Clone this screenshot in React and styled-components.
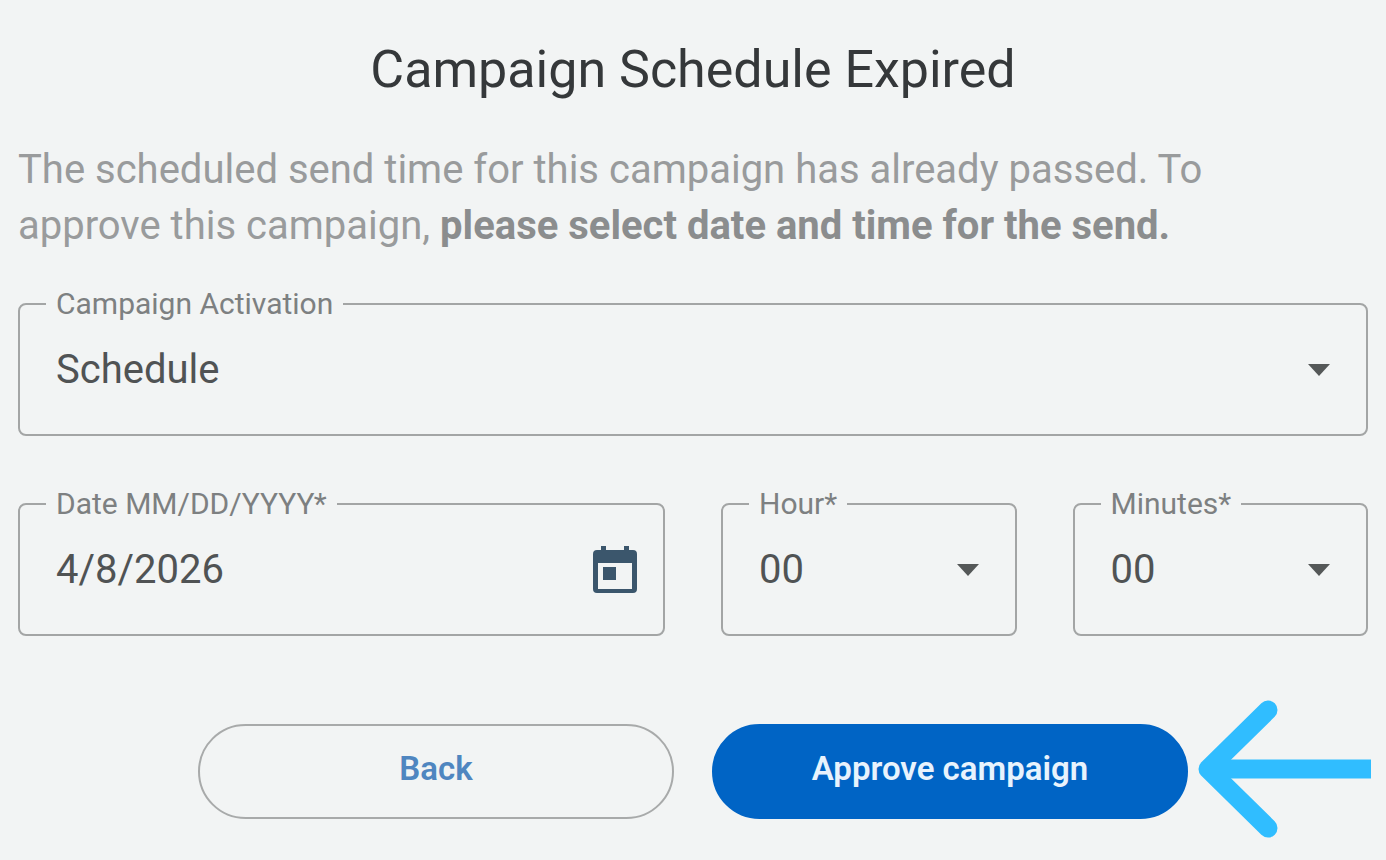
import { useState } from "react";
import styled, { createGlobalStyle } from "styled-components";

const GlobalStyle = createGlobalStyle`
  * {
    box-sizing: border-box;
  }

  body {
    margin: 0;
    background-color: #f2f4f4;
    font-family: Roboto, "Liberation Sans", sans-serif;
  }
`;

const Dialog = styled.form`
  display: flex;
  flex-direction: column;
  padding: 38px 18px 16px 18px;
`;

const Title = styled.h1`
  margin: 0;
  font-size: 52px;
  font-weight: 400;
  line-height: 64px;
  text-align: center;
  color: #35383a;
`;

const Message = styled.p`
  margin: 40px 0 34px;
  font-size: 40px;
  line-height: 56px;
  color: #999b9c;
`;

const Strong = styled.strong`
  font-weight: 700;
  color: #8b8d8e;
`;

const Fields = styled.div`
  display: grid;
  grid-template-columns: repeat(4, minmax(0, 1fr));
  column-gap: 56px;
  row-gap: 52px;
`;

const Outline = styled.fieldset`
  grid-column: span ${(props) => props.$span};
  min-width: 0;
  height: 148px;
  margin: 0;
  padding: 0 26px;
  border: 2px solid #a3a5a5;
  border-radius: 8px;
`;

const Legend = styled.legend`
  padding: 0 10px;
  font-size: 30px;
  line-height: 32px;
  color: #7d8081;
`;

const Control = styled.div`
  display: flex;
  align-items: center;
  height: 100px;
  padding-left: 10px;
`;

const Select = styled.select`
  flex: 1;
  min-width: 0;
  padding: 0;
  border: none;
  outline: none;
  appearance: none;
  background: transparent;
  font-family: inherit;
  font-size: 40px;
  line-height: 48px;
  color: #505354;
`;

const Input = styled.input`
  flex: 1;
  min-width: 0;
  padding: 0;
  border: none;
  outline: none;
  background: transparent;
  font-family: inherit;
  font-size: 40px;
  line-height: 48px;
  color: #505354;
`;

const Caret = styled.svg`
  flex: none;
  width: 22px;
  height: 12px;
  margin-right: 10px;
  pointer-events: none;
`;

const IconButton = styled.button`
  display: flex;
  padding: 0;
  border: none;
  background: transparent;
  cursor: pointer;
`;

const Actions = styled.div`
  display: grid;
  grid-template-columns: minmax(0, 1fr) 476px 476px minmax(0, 1fr);
  column-gap: 38px;
  align-items: center;
  margin-top: 64px;
`;

const Button = styled.button`
  height: 95px;
  padding: 0 24px 4px;
  border: 2px solid ${(props) => (props.$primary ? "#0064c5" : "#a8aaaa")};
  border-radius: 48px;
  background-color: ${(props) => (props.$primary ? "#0064c5" : "transparent")};
  color: ${(props) => (props.$primary ? "#e8f3fd" : "#4f86c0")};
  font-family: inherit;
  font-size: 33px;
  font-weight: 600;
  line-height: 40px;
  cursor: pointer;

  &:first-child {
    grid-column: 2;
  }
`;

const Arrow = styled.svg`
  width: 173px;
  height: 142px;
  margin-left: -28px;
`;

const SelectField = ({ id, label, span, options }) => {
  const [value, setValue] = useState(options[0]);

  return (
    <Outline $span={span}>
      <Legend>
        <label htmlFor={id}>{label}</label>
      </Legend>
      <Control>
        <Select
          id={id}
          value={value}
          onChange={(e) => setValue(e.target.value)}
        >
          {options.map((option) => (
            <option key={option}>{option}</option>
          ))}
        </Select>
        <Caret viewBox="0 0 22 12" aria-hidden="true">
          <path d="M0 0h22L11 12z" fill="#555858" />
        </Caret>
      </Control>
    </Outline>
  );
};

const App = () => {
  const [date, setDate] = useState("4/8/2026");

  return (
    <>
      <GlobalStyle />
      <Dialog onSubmit={(e) => e.preventDefault()}>
        <Title>Campaign Schedule Expired</Title>
        <Message>
          The scheduled send time for this campaign has already passed. To
          <br />
          approve this campaign,{" "}
          <Strong>please select date and time for the send.</Strong>
        </Message>
        <Fields>
          <SelectField
            id="activation"
            label="Campaign Activation"
            span={4}
            options={["Schedule", "Immediately"]}
          />
          <Outline $span={2}>
            <Legend>
              <label htmlFor="date">Date MM/DD/YYYY*</label>
            </Legend>
            <Control>
              <Input
                id="date"
                value={date}
                onChange={(e) => setDate(e.target.value)}
              />
              <IconButton type="button" aria-label="Open calendar">
                <svg width="44" height="48" viewBox="0 0 44 48">
                  <path
                    fill="#3b566c"
                    fillRule="evenodd"
                    d="M8 0h5v4h18V0h5v4h4a4 4 0 0 1 4 4v35a4 4 0 0 1-4 4H4a4 4 0 0 1-4-4V8a4 4 0 0 1 4-4h4zM5 17v26h34V17z"
                  />
                  <path fill="#3b566c" d="M10 21h13v13H10z" />
                </svg>
              </IconButton>
            </Control>
          </Outline>
          <SelectField
            id="hour"
            label="Hour*"
            span={1}
            options={["00", "06", "12", "18"]}
          />
          <SelectField
            id="minutes"
            label="Minutes*"
            span={1}
            options={["00", "15", "30", "45"]}
          />
        </Fields>
        <Actions>
          <Button type="button">Back</Button>
          <Button type="submit" $primary>
            Approve campaign
          </Button>
          <Arrow viewBox="0 0 173 142" aria-hidden="true">
            <path
              d="M70 10L10 69l60 59"
              fill="none"
              stroke="#30bdff"
              strokeWidth="19"
              strokeLinecap="round"
              strokeLinejoin="round"
            />
            <path d="M12 69h161" stroke="#30bdff" strokeWidth="19" />
          </Arrow>
        </Actions>
      </Dialog>
    </>
  );
};

export default App;
